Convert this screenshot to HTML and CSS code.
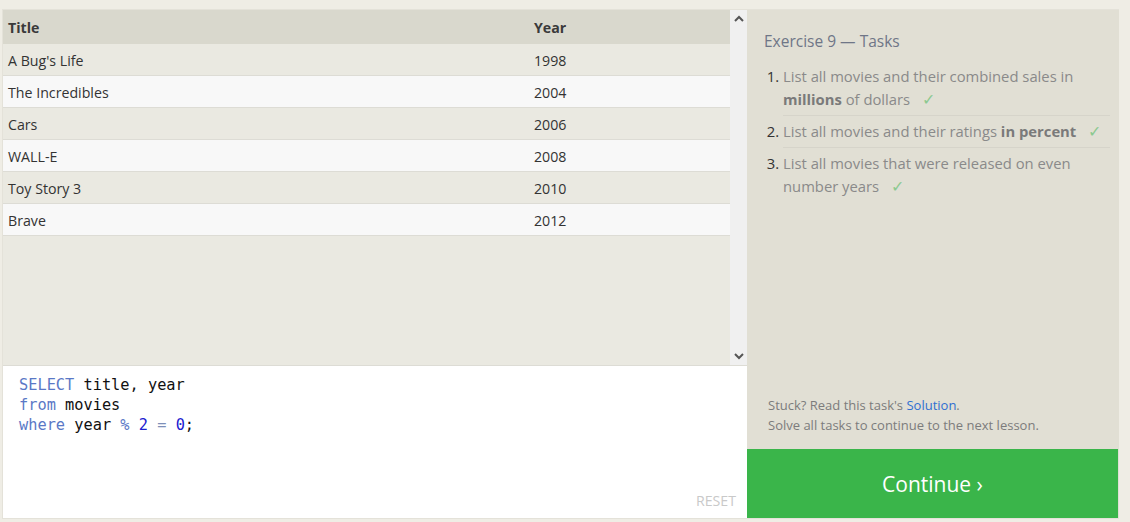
FILE: index.html
```html
<!DOCTYPE html>
<html>
<head>
<meta charset="utf-8">
<link rel="stylesheet" href="styles.css">
</head>
<body>
<div class="app">
  <div class="left">
    <div class="results">
      <div class="table">
        <div class="row head"><div class="c-title">Title</div><div class="c-year">Year</div></div>
        <div class="row odd"><div class="c-title">A Bug's Life</div><div class="c-year">1998</div></div>
        <div class="row even"><div class="c-title">The Incredibles</div><div class="c-year">2004</div></div>
        <div class="row odd"><div class="c-title">Cars</div><div class="c-year">2006</div></div>
        <div class="row even"><div class="c-title">WALL-E</div><div class="c-year">2008</div></div>
        <div class="row odd"><div class="c-title">Toy Story 3</div><div class="c-year">2010</div></div>
        <div class="row even"><div class="c-title">Brave</div><div class="c-year">2012</div></div>
      </div>
      <div class="scrollbar">
        <svg class="arrow" width="10" height="7" viewBox="0 0 10 7"><path d="M1 6 L5 2 L9 6" fill="none" stroke="#555" stroke-width="2"/></svg>
        <svg class="arrow" width="10" height="7" viewBox="0 0 10 7"><path d="M1 1 L5 5 L9 1" fill="none" stroke="#555" stroke-width="2"/></svg>
      </div>
    </div>
    <div class="editor">
      <pre class="code"><span class="kw">SELECT</span> title, year
<span class="kw">from</span> movies
<span class="kw">where</span> year <span class="op">%</span> <span class="num">2</span> <span class="eq">=</span> <span class="num">0</span>;</pre>
      <div class="reset">RESET</div>
    </div>
  </div>
  <div class="right">
    <div class="tasks">
      <h2 class="heading">Exercise 9 — Tasks</h2>
      <ol class="list">
        <li><span class="txt">List all movies and their combined sales in <b>millions</b> of dollars<span class="check">✓</span></span></li>
        <li><span class="txt">List all movies and their ratings <b>in percent</b><span class="check">✓</span></span></li>
        <li><span class="txt">List all movies that were released on even number years<span class="check">✓</span></span></li>
      </ol>
    </div>
    <div class="help">
      <p>Stuck? Read this task's <a class="link">Solution</a>.</p>
      <p>Solve all tasks to continue to the next lesson.</p>
    </div>
    <div class="continue">Continue ›</div>
  </div>
</div>
</body>
</html>
```
FILE: styles.css
```css
html, body {
  margin: 0;
  padding: 0;
}
body {
  background: #efede5;
  font-family: "Open Sans", "Noto Sans", sans-serif;
  width: 1130px;
  height: 522px;
  overflow: hidden;
}
.app {
  display: flex;
  margin: 9px 0 0 2px;
  width: 1116px;
  height: 508px;
  border: 1px solid #e4e2d9;
  border-right: none;
}
.left {
  width: 744px;
  display: flex;
  flex-direction: column;
}
.results {
  height: 355px;
  display: flex;
  background: #eae9e1;
}
.table {
  flex: 1;
}
.row {
  display: flex;
  height: 31px;
  box-sizing: content-box;
  align-items: center;
  border-bottom: 1px solid #dddcd5;
  font-size: 14.2px;
  color: #333;
}
.row.odd, .row.even {
  padding-top: 1px;
  height: 30px;
}
.row.head {
  height: 34px;
  padding-top: 1px;
  box-sizing: border-box;
  background: #d9d8cd;
  font-weight: 700;
  border-bottom: none;
  color: #3a3a3a;
}
.row.odd { background: #eae9e1; }
.row.even { background: #f8f8f8; }
.c-title {
  width: 526px;
  padding-left: 5px;
}
.c-year {
  flex: 1;
}
.scrollbar {
  width: 17px;
  background: #f0f0f0;
  display: flex;
  flex-direction: column;
  justify-content: space-between;
  align-items: center;
  padding: 5px 0 5px;
}
.editor {
  flex: 1;
  background: #fff;
  border-top: 1px solid #dddcd5;
  display: flex;
  flex-direction: column;
}
.code {
  margin: 0;
  padding: 9px 0 0 16px;
  font-family: "DejaVu Sans Mono", "Liberation Mono", monospace;
  font-size: 15.3px;
  line-height: 20px;
  color: #111;
  flex: 1;
}
.kw { color: #5a78c6; }
.op { color: #5a78c6; }
.num { color: #1c20d0; }
.eq { color: #7d8fb8; }
.reset {
  align-self: flex-end;
  margin: 0 11px 8px 0;
  font-size: 14.2px;
  color: #c9c9c9;
}
.right {
  flex: 1;
  background: #e1dfd4;
  display: flex;
  flex-direction: column;
}
.tasks {
  flex: 1;
  padding: 20px 9px 0 17px;
}
.heading {
  margin: 0;
  font-size: 15.5px;
  font-weight: 400;
  color: #6f7687;
  line-height: 22px;
}
.list {
  margin: 13px 0 0;
  padding: 0 0 0 19px;
  font-size: 14.8px;
  color: #8a8a8a;
  line-height: 23px;
}
.list li {
  padding: 0 0 4px;
  margin-bottom: 4px;
  border-bottom: 1px solid #d6d4ca;
}
.list li:last-child {
  border-bottom: none;
}
.list li::marker {
  color: #333;
}
.list b {
  color: #7a7a7a;
}
.check {
  display: inline-block;
  line-height: 1;
  font-size: 16px;
  color: #8cc990;
  margin-left: 12px;
}
.help {
  padding: 0 10px 14px 21px;
  font-size: 13px;
  color: #7c7c7c;
  line-height: 20px;
}
.help p {
  margin: 0;
}
.link {
  color: #2f6fd1;
}
.continue {
  height: 69px;
  margin-right: 1px;
  background: #3ab54a;
  color: #fff;
  font-size: 21px;
  display: flex;
  align-items: center;
  justify-content: center;
}
```
